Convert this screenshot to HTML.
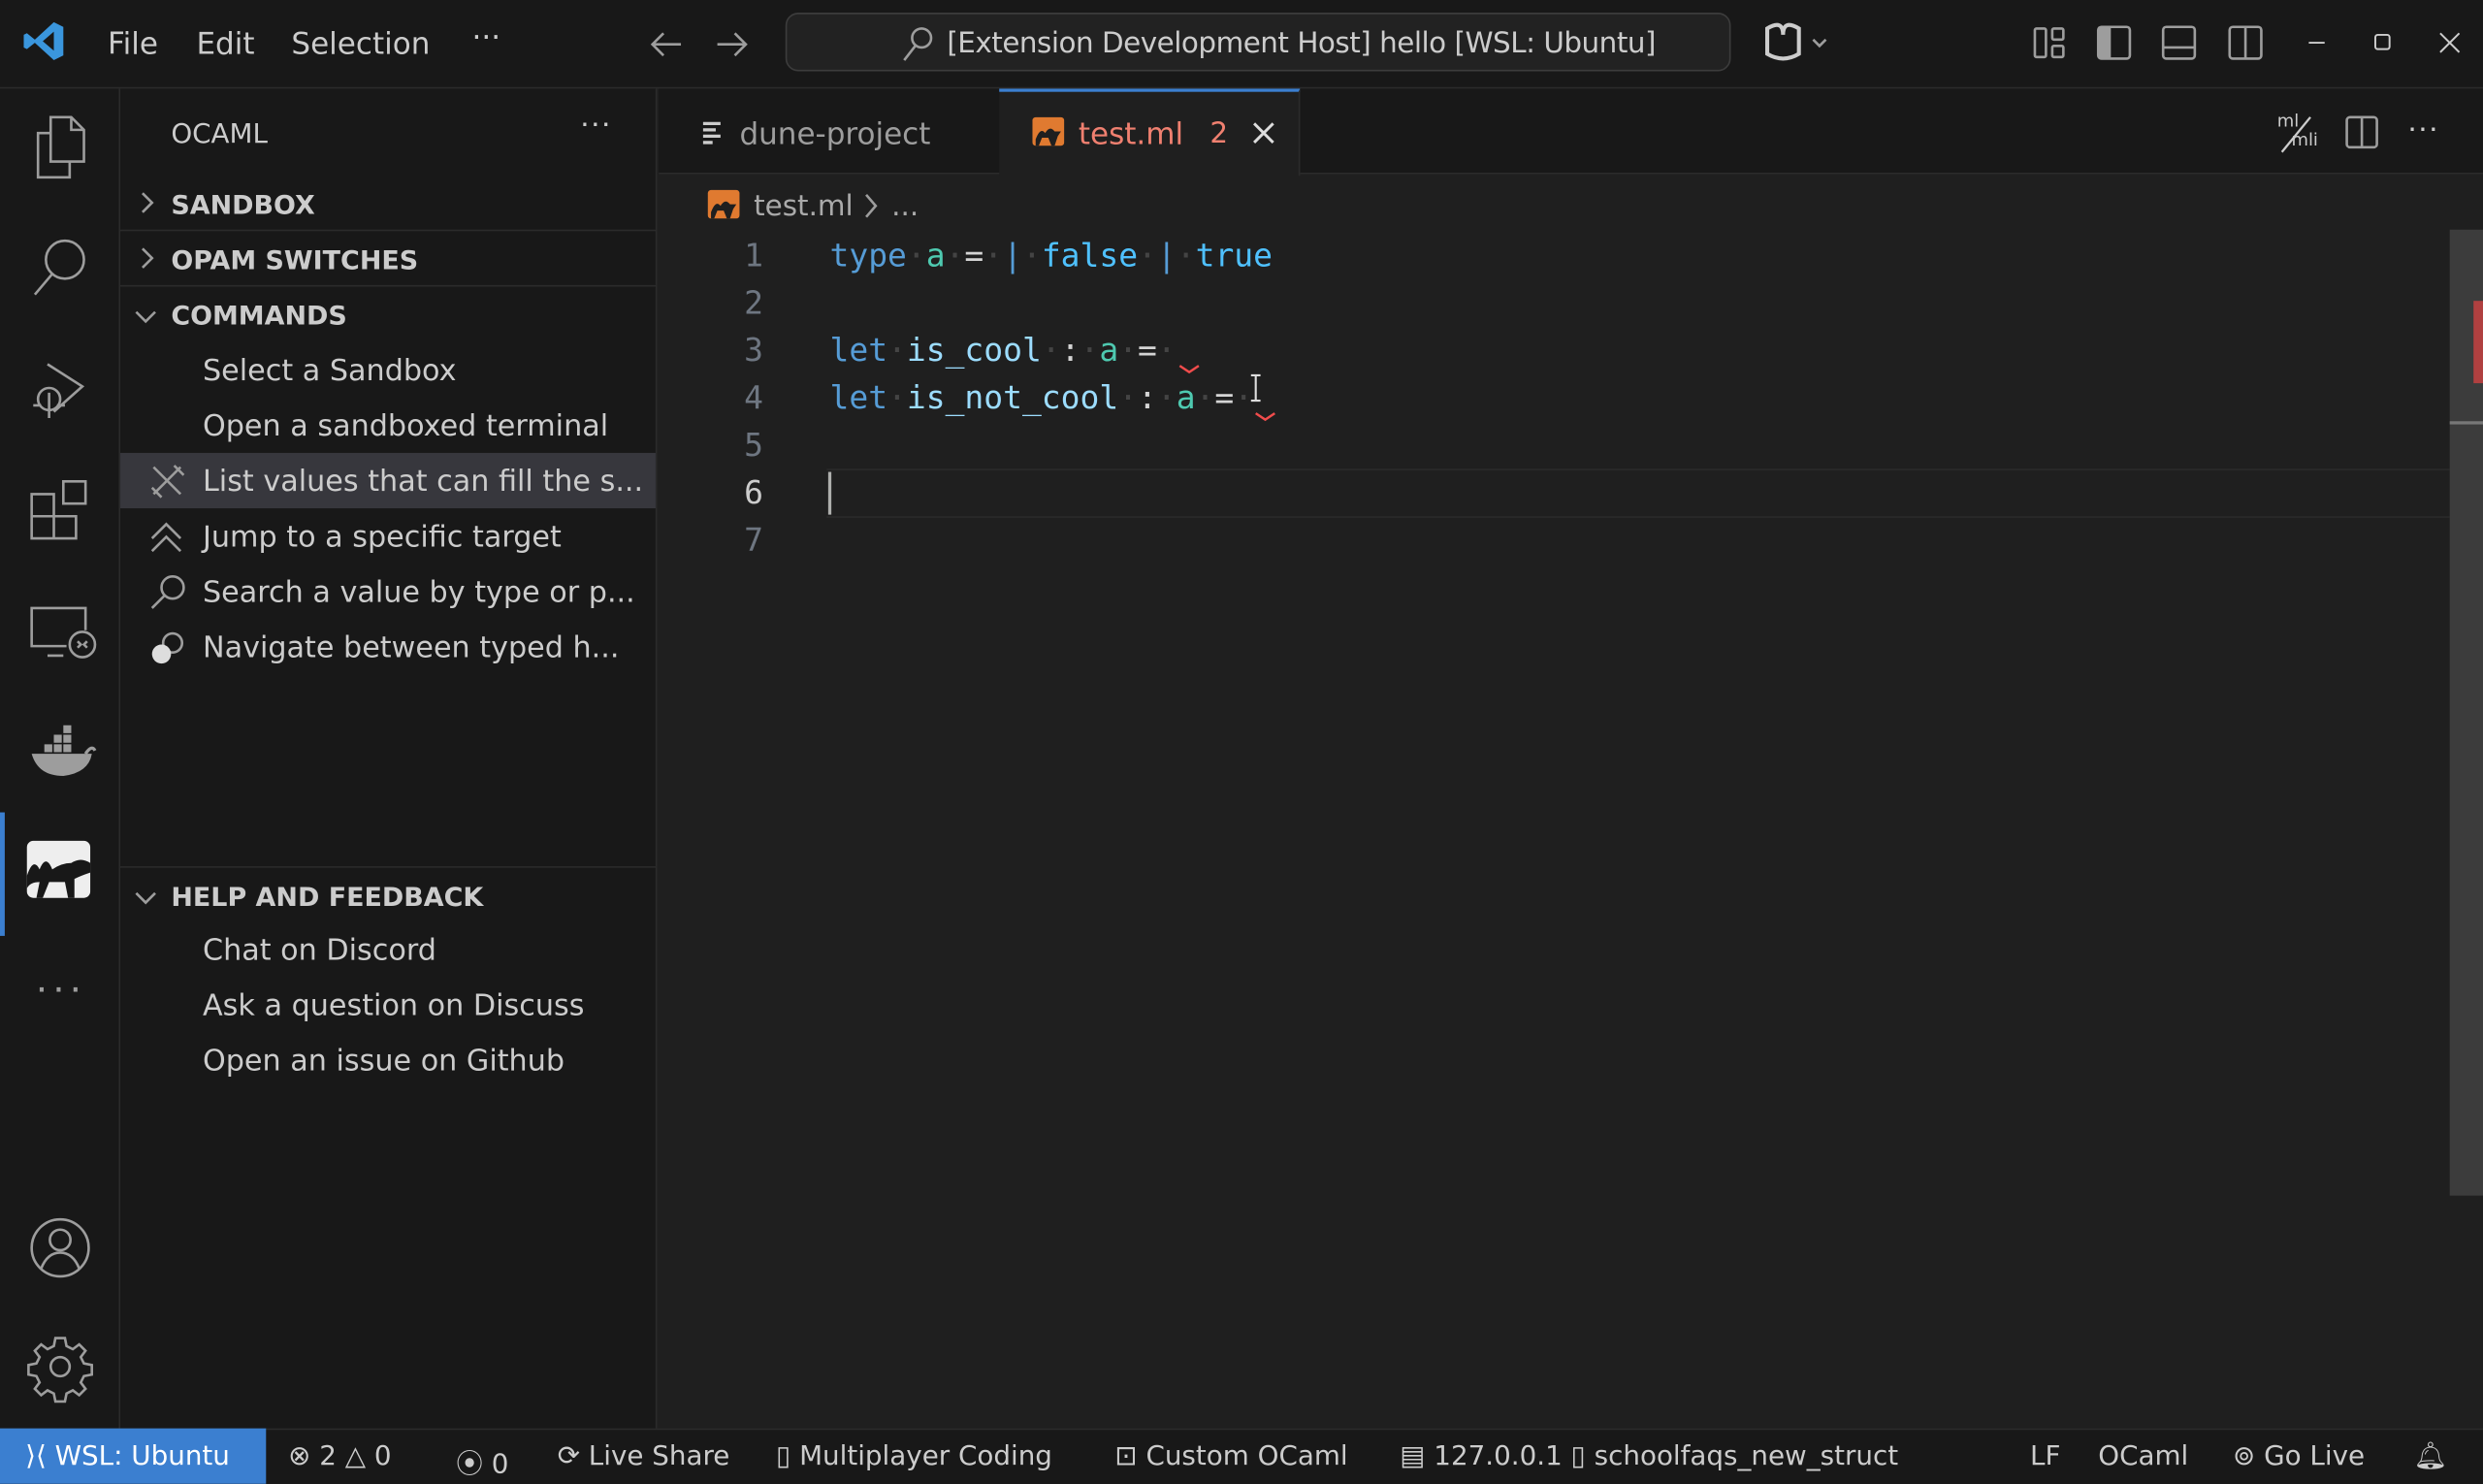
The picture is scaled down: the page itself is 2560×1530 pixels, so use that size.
<!DOCTYPE html>
<html><head><meta charset="utf-8"><style>
*{margin:0;padding:0;box-sizing:border-box}
html,body{width:2560px;height:1530px;overflow:hidden;background:#1f1f1f}
#w{position:absolute;left:0;top:0;width:1568px;height:937px;transform:scale(1.63265);transform-origin:0 0;font-family:"Liberation Sans","DejaVu Sans",sans-serif;color:#ccc;background:#1f1f1f}
.a{position:absolute}
.ui{font-family:"DejaVu Sans","Liberation Sans",sans-serif}
svg{position:absolute;overflow:visible}
.ic{fill:none;stroke:#9d9d9d;stroke-width:1.6}
.code{font-family:"DejaVu Sans Mono","Liberation Mono",monospace;font-size:20.2px;white-space:pre}
.ln{position:absolute;left:440px;width:42px;text-align:right;color:#6e7681}
.dot{color:#444}
</style></head><body><div id="w">
<!-- title bar -->
<div class="a" style="left:0;top:0;width:1568px;height:56px;background:#181818;border-bottom:1px solid #2b2b2b"></div>
<svg style="left:14px;top:12px" width="28" height="28" viewBox="0 0 28 28"><path d="M20 2 L26 5 V23 L20 26 L8 15 L3 19 L1 18 V10 L3 9 L8 13 Z M20 8 L13 14 L20 20 Z" fill="#3a96dd"/></svg>
<div class="a ui" style="left:68px;top:17px;font-size:19px;color:#ccc">File</div>
<div class="a ui" style="left:124px;top:17px;font-size:19px;color:#ccc">Edit</div>
<div class="a ui" style="left:184px;top:17px;font-size:19px;color:#ccc">Selection</div>
<div class="a ui" style="left:298px;top:13px;font-size:19px;color:#ccc">···</div>
<svg style="left:410px;top:18px" width="22" height="20"><path class="ic" d="M20 10 H2 M9 3 L2 10 L9 17"/></svg>
<svg style="left:451px;top:18px" width="22" height="20"><path class="ic" d="M2 10 H20 M13 3 L20 10 L13 17"/></svg>
<div class="a" style="left:496px;top:8px;width:597px;height:37px;border:1px solid #3c3c3c;border-radius:8px;background:#222"></div>
<svg style="left:568px;top:16px" width="22" height="24"><circle class="ic" cx="14" cy="8" r="6" stroke="#ccc"/><path class="ic" stroke="#ccc" d="M10 13 L3 22"/></svg>
<div class="a ui" style="left:598px;top:17px;font-size:18px;color:#ccc;letter-spacing:-0.3px">[Extension Development Host] hello [WSL: Ubuntu]</div>
<svg style="left:1113px;top:14px" width="50" height="26"><path d="M3 4 Q13 -2 13 8 Q13 -2 23 4 L23 20 Q13 26 3 20 Z" fill="none" stroke="#ccc" stroke-width="2.5"/><path class="ic" stroke="#ccc" d="M32 11 L36 15 L40 11"/></svg>
<svg style="left:1284px;top:16px" width="22" height="24"><rect class="ic" x="1" y="2" width="7" height="18" rx="1"/><rect class="ic" x="12" y="2" width="7" height="7" rx="1"/><rect class="ic" x="12" y="13" width="7" height="7" rx="1"/></svg>
<svg style="left:1324px;top:16px" width="24" height="24"><rect class="ic" x="1" y="1" width="20" height="20" rx="2"/><rect x="1" y="1" width="8" height="20" fill="#9d9d9d"/></svg>
<svg style="left:1365px;top:16px" width="24" height="24"><rect class="ic" x="1" y="1" width="20" height="20" rx="2"/><path class="ic" d="M1 14 H21"/></svg>
<svg style="left:1407px;top:16px" width="24" height="24"><rect class="ic" x="1" y="1" width="20" height="20" rx="2"/><path class="ic" d="M11 1 V21"/></svg>
<svg style="left:1456px;top:26px" width="14" height="4"><path d="M2 1 H12" stroke="#ccc" stroke-width="1.2"/></svg>
<svg style="left:1499px;top:21px" width="12" height="12"><rect x="1" y="1" width="9" height="9" rx="1.5" fill="none" stroke="#ccc" stroke-width="1.2"/></svg>
<svg style="left:1540px;top:20px" width="14" height="14"><path d="M1 1 L13 13 M13 1 L1 13" stroke="#ccc" stroke-width="1.2"/></svg>

<!-- activity bar -->
<div class="a" style="left:0;top:56px;width:76px;height:846px;background:#181818;border-right:1px solid #2b2b2b"></div>
<svg style="left:20px;top:72px" width="36" height="42"><path class="ic" stroke-width="2" d="M12 2 H25 L33 10 V30 H12 Z M25 2 V10 H33 M12 12 H4 V40 H24 V30"/></svg>
<svg style="left:18px;top:148px" width="40" height="42"><circle class="ic" stroke-width="2" cx="23" cy="16" r="12"/><path class="ic" stroke-width="2.5" d="M15 25 L4 38"/></svg>
<svg style="left:18px;top:226px" width="40" height="42"><path class="ic" stroke-width="2" d="M12 4 L34 18 L16 34 M6 26 a7 7 0 1 0 14 0 a7 7 0 1 0 -14 0 M3 30 H8 M18 30 H23 M13 22 V38"/></svg>
<svg style="left:16px;top:300px" width="44" height="44"><path class="ic" stroke-width="2" d="M4 12 H18 V26 H4 Z M4 26 H18 V40 H4 Z M18 26 H32 V40 H18 Z M24 4 H38 V18 H24 Z"/></svg>
<svg style="left:16px;top:380px" width="44" height="40"><path class="ic" stroke-width="2" d="M26 28 H4 V4 H38 V18 M14 34 H24"/><circle class="ic" stroke-width="2" cx="36" cy="27" r="8"/><path class="ic" d="M33 25 L35 27 L33 29 M39 25 L37 27 L39 29"/></svg>
<svg style="left:18px;top:458px" width="42" height="34"><path d="M2 18 H40 Q38 30 22 32 Q6 32 2 18 Z" fill="#9d9d9d"/><path d="M10 12 h5 v5 h-5z M16 12 h5 v5 h-5z M22 12 h5 v5 h-5z M16 6 h5 v5 h-5z M22 6 h5 v5 h-5z M22 0 h5 v5 h-5z" fill="#9d9d9d"/><path d="M36 18 Q40 12 42 16" stroke="#9d9d9d" stroke-width="2" fill="none"/></svg>
<div class="a" style="left:0;top:513px;width:3px;height:78px;background:#3b7fd0"></div>
<svg style="left:17px;top:531px" width="44" height="40"><rect x="0" y="0" width="40" height="36" rx="4" fill="#eee"/><path d="M0 22 Q4 10 8 18 Q12 8 16 18 Q22 14 28 14 Q34 10 40 14 V20 Q34 22 30 24 L30 36 L26 36 L24 26 L14 26 L10 36 L6 36 L8 26 Q2 26 0 30 Z" fill="#181818"/></svg>
<div class="a" style="left:22px;top:608px;font-size:26px;color:#9d9d9d;letter-spacing:2px">···</div>
<svg style="left:18px;top:768px" width="42" height="42"><circle class="ic" stroke-width="2" cx="20" cy="20" r="18"/><circle class="ic" stroke-width="2" cx="20" cy="15" r="6.5"/><path class="ic" stroke-width="2" d="M8 33 Q12 23 20 23 Q28 23 32 33"/></svg>
<svg style="left:18px;top:843px" width="42" height="42"><circle class="ic" stroke-width="2" cx="20" cy="20" r="6"/><path class="ic" stroke-width="2" d="M17 2 h6 l1 5 l4 2 l4 -3 l4 4 l-3 4 l2 4 l5 1 v6 l-5 1 l-2 4 l3 4 l-4 4 l-4 -3 l-4 2 l-1 5 h-6 l-1 -5 l-4 -2 l-4 3 l-4 -4 l3 -4 l-2 -4 l-5 -1 v-6 l5 -1 l2 -4 l-3 -4 l4 -4 l4 3 l4 -2 z"/></svg>

<!-- sidebar -->
<div class="a" style="left:76px;top:56px;width:339px;height:846px;background:#181818;border-right:1px solid #2b2b2b"></div>
<div class="a ui" style="left:108px;top:75px;font-size:17px;color:#ccc">OCAML</div>
<div class="a" style="left:366px;top:67px;font-size:20px;color:#ccc">···</div>
<div class="a" style="left:76px;top:145px;width:339px;height:1px;background:#2b2b2b"></div>
<div class="a" style="left:76px;top:180px;width:339px;height:1px;background:#2b2b2b"></div>
<div class="a" style="left:76px;top:547px;width:339px;height:1px;background:#2b2b2b"></div>
<svg style="left:86px;top:120px" width="14" height="16"><path class="ic" stroke="#ccc" d="M4 2 L10 8 L4 14"/></svg>
<svg style="left:86px;top:155px" width="14" height="16"><path class="ic" stroke="#ccc" d="M4 2 L10 8 L4 14"/></svg>
<svg style="left:84px;top:193px" width="16" height="14"><path class="ic" stroke="#ccc" d="M2 4 L8 10 L14 4"/></svg>
<svg style="left:84px;top:560px" width="16" height="14"><path class="ic" stroke="#ccc" d="M2 4 L8 10 L14 4"/></svg>
<div class="a ui" style="left:108px;top:120px;font-size:16.5px;font-weight:bold;color:#ccc">SANDBOX</div>
<div class="a ui" style="left:108px;top:155px;font-size:16.5px;font-weight:bold;color:#ccc">OPAM SWITCHES</div>
<div class="a ui" style="left:108px;top:190px;font-size:16.5px;font-weight:bold;color:#ccc">COMMANDS</div>
<div class="a" style="left:76px;top:286px;width:338px;height:35px;background:#37373d"></div>
<div class="ui" style="font-size:18.5px;color:#ccc">
<div class="a" style="left:128px;top:224px">Select a Sandbox</div>
<div class="a" style="left:128px;top:259px">Open a sandboxed terminal</div>
<div class="a" style="left:128px;top:294px">List values that can fill the s...</div>
<div class="a" style="left:128px;top:329px">Jump to a specific target</div>
<div class="a" style="left:128px;top:364px">Search a value by type or p...</div>
<div class="a" style="left:128px;top:399px">Navigate between typed h...</div>
<div class="a" style="left:108px;top:557px;font-size:16.5px;font-weight:bold">HELP AND FEEDBACK</div>
<div class="a" style="left:128px;top:590px">Chat on Discord</div>
<div class="a" style="left:128px;top:625px">Ask a question on Discuss</div>
<div class="a" style="left:128px;top:660px">Open an issue on Github</div>
</div>
<svg style="left:94px;top:292px" width="24" height="24"><path class="ic" stroke="#ccc" d="M3 3 L20 20 M20 3 L3 20 M16 2 L22 8 M2 16 L8 22"/></svg>
<svg style="left:94px;top:328px" width="24" height="22"><path class="ic" stroke="#ccc" d="M2 12 L11 3 L20 12 M2 20 L11 11 L20 20"/></svg>
<svg style="left:94px;top:362px" width="24" height="24"><circle class="ic" stroke="#ccc" cx="15" cy="9" r="7"/><path class="ic" stroke="#ccc" d="M10 14 L2 22"/></svg>
<svg style="left:94px;top:398px" width="26" height="24"><circle cx="15" cy="8" r="6" class="ic" stroke="#ccc"/><circle cx="8" cy="15" r="6" fill="#ddd"/></svg>

<!-- tabs -->
<div class="a" style="left:416px;top:56px;width:1152px;height:54px;background:#181818;border-bottom:1px solid #2b2b2b"></div>
<div class="a" style="left:631px;top:56px;width:190px;height:55px;background:#1f1f1f;border-top:2px solid #3b7fd0;border-right:1px solid #2b2b2b"></div>
<svg style="left:443px;top:76px" width="14" height="16"><path d="M1 2 H12 M1 6 H9 M1 10 H12 M1 14 H7" stroke="#ccc" stroke-width="2"/></svg>
<div class="a ui" style="left:467px;top:74px;font-size:19px;color:#9d9d9d">dune-project</div>
<svg style="left:652px;top:74px" width="20" height="18"><rect width="20" height="18" rx="2" fill="#e07a30"/><path d="M2 14 Q5 6 8 10 Q11 5 14 9 L18 9 L16 12 L14 18 H12 L10 13 H6 L4 18 H2Z" fill="#1f1f1f"/></svg>
<div class="a ui" style="left:681px;top:74px;font-size:19px;color:#f08070">test.ml</div>
<div class="a ui" style="left:764px;top:74px;font-size:18px;color:#f08070">2</div>
<svg style="left:790px;top:76px" width="16" height="16"><path d="M2 2 L14 14 M14 2 L2 14" stroke="#ddd" stroke-width="1.8"/></svg>
<div class="a ui" style="left:1438px;top:70px;font-size:11px;color:#ccc">ml</div>
<div class="a ui" style="left:1447px;top:82px;font-size:11px;color:#ccc">mli</div>
<svg style="left:1437px;top:72px" width="26" height="26"><path d="M22 2 L4 24" stroke="#ccc" stroke-width="1.4"/></svg>
<svg style="left:1481px;top:73px" width="22" height="22"><rect class="ic" stroke="#ccc" x="1" y="1" width="19" height="19" rx="2"/><path class="ic" stroke="#ccc" d="M10.5 1 V20"/></svg>
<div class="a" style="left:1520px;top:70px;font-size:20px;color:#ccc">···</div>

<!-- breadcrumb -->
<svg style="left:447px;top:120px" width="20" height="18"><rect width="20" height="18" rx="2" fill="#e07a30"/><path d="M2 14 Q5 6 8 10 Q11 5 14 9 L18 9 L16 12 L14 18 H12 L10 13 H6 L4 18 H2Z" fill="#1f1f1f"/></svg>
<div class="a ui" style="left:476px;top:120px;font-size:18px;color:#aaa">test.ml</div>
<svg style="left:544px;top:121px" width="12" height="18"><path class="ic" d="M3 2 L9 9 L3 16"/></svg>
<div class="a ui" style="left:563px;top:120px;font-size:18px;color:#aaa">...</div>

<!-- code -->
<div class="a" style="left:522px;top:296px;width:1025px;height:31px;border-top:1px solid #2a2a2a;border-bottom:1px solid #2a2a2a"></div>
<div class="code">
<div class="ln" style="top:149px">1</div>
<div class="ln" style="top:179px">2</div>
<div class="ln" style="top:209px">3</div>
<div class="ln" style="top:239px">4</div>
<div class="ln" style="top:269px">5</div>
<div class="ln" style="top:299px;color:#ccc">6</div>
<div class="ln" style="top:329px">7</div>
<div class="a" style="left:524px;top:149px"><span style="color:#569cd6">type</span><span class="dot">·</span><span style="color:#4ec9b0">a</span><span class="dot">·</span><span style="color:#d4d4d4">=</span><span class="dot">·</span><span style="color:#569cd6">|</span><span class="dot">·</span><span style="color:#4fc1ff">false</span><span class="dot">·</span><span style="color:#569cd6">|</span><span class="dot">·</span><span style="color:#4fc1ff">true</span></div>
<div class="a" style="left:524px;top:209px"><span style="color:#569cd6">let</span><span class="dot">·</span><span style="color:#9cdcfe">is_cool</span><span class="dot">·</span><span style="color:#d4d4d4">:</span><span class="dot">·</span><span style="color:#4ec9b0">a</span><span class="dot">·</span><span style="color:#d4d4d4">=</span><span class="dot">·</span></div>
<div class="a" style="left:524px;top:239px"><span style="color:#569cd6">let</span><span class="dot">·</span><span style="color:#9cdcfe">is_not_cool</span><span class="dot">·</span><span style="color:#d4d4d4">:</span><span class="dot">·</span><span style="color:#4ec9b0">a</span><span class="dot">·</span><span style="color:#d4d4d4">=</span><span class="dot">·</span></div>
</div>
<svg style="left:744px;top:230px" width="14" height="6"><path d="M1 1 L7 5 L13 1" stroke="#f14c4c" stroke-width="1.5" fill="none"/></svg>
<svg style="left:792px;top:260px" width="14" height="6"><path d="M1 1 L7 5 L13 1" stroke="#f14c4c" stroke-width="1.5" fill="none"/></svg>
<svg style="left:788px;top:236px" width="10" height="20"><path d="M2 1 H8 M5 1 V17 M2 17 H8" stroke="#ddd" stroke-width="1.3"/></svg>
<div class="a" style="left:523px;top:298px;width:2px;height:27px;background:#aeafad"></div>
<!-- scrollbar -->
<div class="a" style="left:1547px;top:145px;width:21px;height:610px;background:#3c3c3c"></div>
<div class="a" style="left:1562px;top:190px;width:6px;height:52px;background:#b04040"></div>
<div class="a" style="left:1547px;top:266px;width:21px;height:2px;background:#777"></div>

<!-- status bar -->
<div class="a" style="left:0;top:902px;width:1568px;height:35px;background:#181818;border-top:1px solid #2b2b2b"></div>
<div class="a" style="left:0;top:902px;width:168px;height:35px;background:#3b7fd0"></div>
<div class="ui" style="font-size:17px;color:#ccc">
<div class="a" style="left:16px;top:910px;color:#fff">⟩⟨&nbsp;WSL: Ubuntu</div>
<div class="a" style="left:182px;top:910px">⊗ 2 △ 0</div>
<div class="a" style="left:288px;top:910px">⦿ 0</div>
<div class="a" style="left:352px;top:910px">⟳ Live Share</div>
<div class="a" style="left:490px;top:910px">▯ Multiplayer Coding</div>
<div class="a" style="left:704px;top:910px">⊡ Custom OCaml</div>
<div class="a" style="left:884px;top:910px">▤ 127.0.0.1 ▯ schoolfaqs_new_struct</div>
<div class="a" style="left:1282px;top:910px">LF</div>
<div class="a" style="left:1325px;top:910px">OCaml</div>
<div class="a" style="left:1410px;top:910px">⊚ Go Live</div>
<div class="a" style="left:1524px;top:910px">🔔︎</div>
</div>
</div></body></html>
